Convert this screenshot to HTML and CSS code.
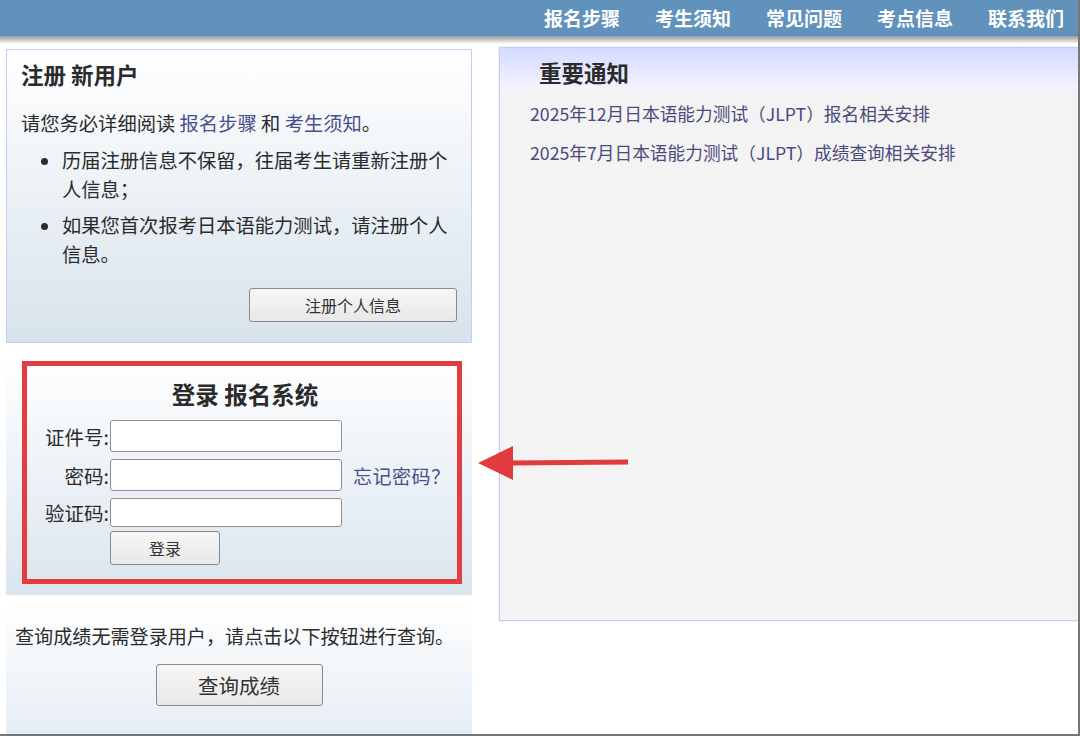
FILE: index.html
```html
<!DOCTYPE html>
<html lang="zh-CN">
<head>
    <meta charset="UTF-8">
    <title>日本语能力测试 报名系统</title>
    <link rel="stylesheet" href="styles.css">
</head>
<body>
    <div class="frame">
        <div class="top-bar">
            <nav class="top-nav">
                <a href="#">报名步骤</a>
                <a href="#">考生须知</a>
                <a href="#">常见问题</a>
                <a href="#">考点信息</a>
                <a href="#">联系我们</a>
            </nav>
        </div>
        <div class="top-shadow"></div>

        <div class="main">
            <div class="left-col">
                <div class="panel register-panel">
                    <h3>注册 新用户</h3>
                    <p class="intro">请您务必详细阅读 <a href="#">报名步骤</a> 和 <a href="#">考生须知</a>。</p>
                    <ul class="notes">
                        <li>历届注册信息不保留，往届考生请重新注册个人信息；</li>
                        <li>如果您首次报考日本语能力测试，请注册个人信息。</li>
                    </ul>
                    <div class="btn-row">
                        <button class="btn btn-register">注册个人信息</button>
                    </div>
                </div>

                <div class="login-panel">
                    <div class="login-box">
                        <h3>登录 报名系统</h3>
                        <form class="login-form">
                            <label for="idNo">证件号:</label>
                            <input type="text" id="idNo">
                            <span></span>

                            <label for="pwd">密码:</label>
                            <input type="password" id="pwd">
                            <a href="#" class="forgot">忘记密码？</a>

                            <label for="code">验证码:</label>
                            <input type="text" id="code" class="code-input">
                            <span></span>

                            <span></span>
                            <button type="button" class="btn btn-login">登录</button>
                        </form>
                    </div>
                </div>

                <div class="score-panel">
                    <p>查询成绩无需登录用户，请点击以下按钮进行查询。</p>
                    <button class="btn btn-score">查询成绩</button>
                </div>
            </div>

            <div class="right-col">
                <div class="news-head">重要通知</div>
                <ul class="news-list">
                    <li><a href="#">2025年12月日本语能力测试（JLPT）报名相关安排</a></li>
                    <li><a href="#">2025年7月日本语能力测试（JLPT）成绩查询相关安排</a></li>
                </ul>
            </div>
        </div>

        <svg class="arrow" width="160" height="44" viewBox="0 0 160 44">
            <line x1="150" y1="20" x2="32" y2="21" stroke="#e03c3f" stroke-width="5"/>
            <polygon points="0,21 35,4 35,38" fill="#e03c3f"/>
        </svg>
    </div>
</body>
</html>
```

FILE: styles.css
```css
* {
    margin: 0;
    padding: 0;
    box-sizing: border-box;
}

body {
    font-family: "Noto Sans CJK SC", "DejaVu Sans", sans-serif;
    color: #2b2b2b;
    background: #fff;
}

a {
    color: #46508a;
    text-decoration: none;
}

.frame {
    position: relative;
    width: 1080px;
    height: 736px;
    overflow: hidden;
    border-right: 2px solid #777;
    border-bottom: 2px solid #777;
}

/* header */
.top-bar {
    height: 36px;
    background: #6192bb;
    display: flex;
    justify-content: flex-end;
    align-items: center;
    padding-right: 14px;
}

.top-nav {
    display: flex;
    gap: 35px;
}

.top-nav a {
    color: #fff;
    font-weight: bold;
    font-size: 19px;
    line-height: 36px;
}

.top-shadow {
    height: 8px;
    background: linear-gradient(#9a9a9a, #fff);
}

.main {
    display: flex;
    align-items: flex-start;
    gap: 27px;
    padding-left: 6px;
}

.left-col {
    width: 466px;
    padding-top: 5px;
}

/* register */
.register-panel {
    border: 1px solid #c9c9f3;
    background: linear-gradient(#fff, #d7e3ec);
    padding: 8px 14px 20px 14px;
    height: 294px;
}

.register-panel h3 {
    font-size: 22.5px;
    line-height: 32px;
}

.intro {
    font-size: 19.3px;
    line-height: 29px;
    margin-top: 19px;
}

.notes {
    padding-left: 41px;
    margin-top: 8px;
    font-size: 19.3px;
    line-height: 29px;
}

.notes li {
    margin-bottom: 7px;
}

.btn-row {
    display: flex;
    justify-content: flex-end;
    margin-top: 19px;
}

.btn {
    font-family: "Noto Sans CJK SC", sans-serif;
    color: #333;
    background: linear-gradient(#f6f6f6, #e8e8e8);
    border: 1px solid #8a8a8a;
    border-radius: 3px;
}

.btn-register {
    width: 208px;
    height: 34px;
    font-size: 16px;
}

/* login */
.login-panel {
    margin-top: 12px;
    background: linear-gradient(#fff, #dae5ee);
    padding: 6px 10px 11px 16px;
}

.login-box {
    border: 5px solid #e23e41;
    padding: 11px 0 14px 0;
}

.login-box h3 {
    text-align: center;
    font-size: 23.5px;
    line-height: 34px;
    margin-bottom: 9px;
    padding-left: 6px;
}

.login-form {
    display: grid;
    grid-template-columns: 83px 232px auto;
    row-gap: 7px;
    align-items: center;
    font-size: 19.5px;
}

.login-form label {
    text-align: right;
    padding-right: 1px;
}

.login-form input {
    height: 32px;
    border: 1px solid #8e8e8e;
    border-radius: 3px;
    background: #fff;
}

.login-form .code-input {
    height: 29px;
}

.forgot {
    margin-left: 11px;
    font-size: 19px;
    letter-spacing: 0.5px;
}

.btn-login {
    width: 110px;
    height: 34px;
    font-size: 16px;
    margin-top: -3px;
}

/* score */
.score-panel {
    margin-top: 5px;
    height: 134px;
    background: linear-gradient(#fff, #e6eef5);
    padding: 22px 0 0 9px;
    text-align: center;
}

.score-panel p {
    text-align: left;
    font-size: 19.1px;
    line-height: 28px;
}

.btn-score {
    margin-top: 14px;
    margin-right: 9px;
    width: 167px;
    height: 42px;
    font-size: 20.5px;
}

/* notices */
.right-col {
    flex: 1;
    height: 574px;
    margin-top: 3px;
    border: 1px solid #c9c9f3;
    border-right: none;
    background: #f3f3f3;
    box-shadow: 0 0 2px #dcdcfb;
}

.news-head {
    height: 41px;
    padding-left: 39px;
    background: linear-gradient(#d3daff, #f4f4ff);
    font-size: 22.5px;
    font-weight: bold;
    line-height: 48px;
}

.news-list {
    list-style: none;
    padding: 5px 0 0 30px;
}

.news-list li {
    font-size: 17.7px;
    line-height: 39px;
}

.news-list a {
    color: #4a4a7c;
}

.arrow {
    position: absolute;
    left: 478px;
    top: 442px;
}
```
